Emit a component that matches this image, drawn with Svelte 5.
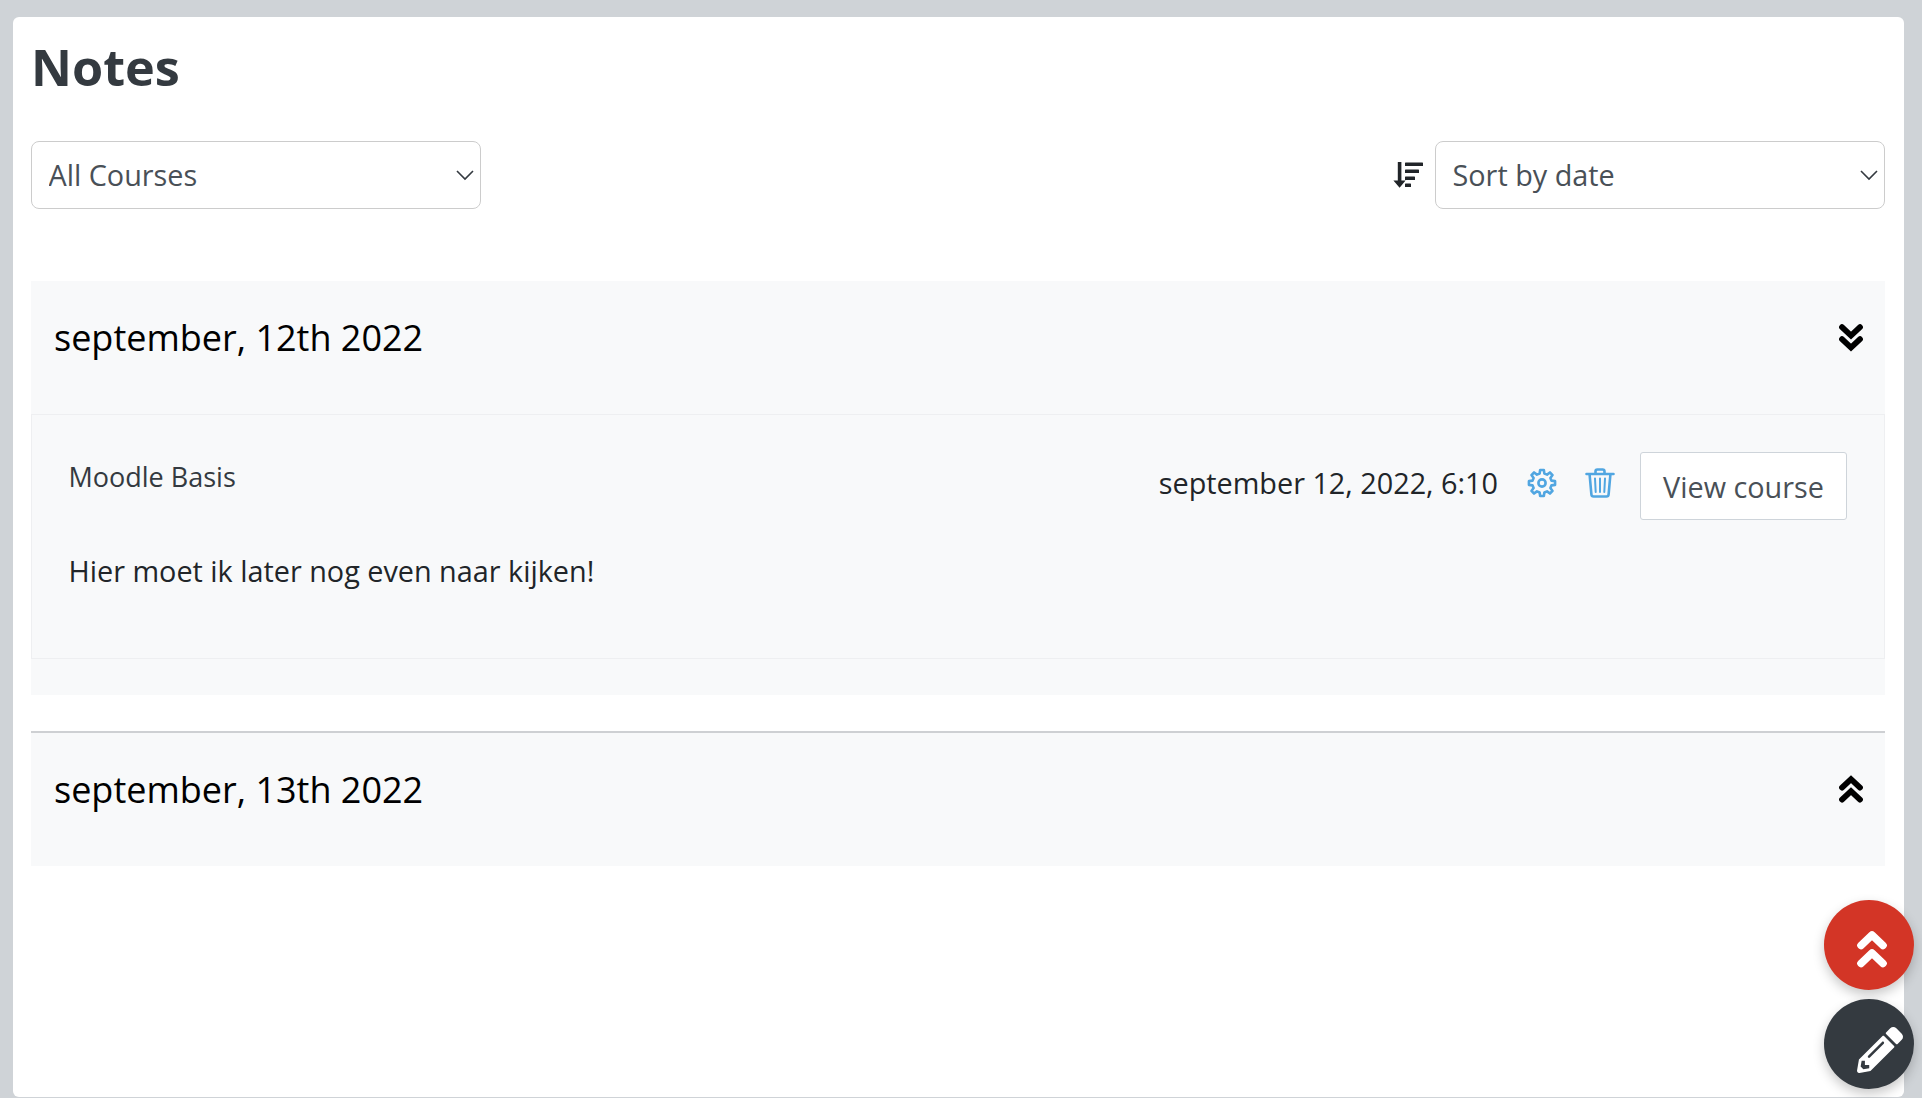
<script>
  const toothPoints = [];
  for (let i = 0; i < 8; i++) {
    const c = i * 45 - 90;
    for (const [r, d] of [[9.8, -14], [13.2, -8], [13.2, 8], [9.8, 14]]) {
      const a = ((c + d) * Math.PI) / 180;
      toothPoints.push(`${(15 + r * Math.cos(a)).toFixed(2)},${(15 + r * Math.sin(a)).toFixed(2)}`);
    }
  }
  const gear = toothPoints.join(" ");

  const sections = [
    {
      title: "september, 12th 2022",
      open: true,
      notes: [
        {
          course: "Moodle Basis",
          date: "september 12, 2022, 6:10",
          text: "Hier moet ik later nog even naar kijken!",
        },
      ],
    },
    { title: "september, 13th 2022", open: false, notes: [] },
  ];
</script>

<div class="page">
  <main class="card">
    <h1>Notes</h1>

    <div class="filters">
      <div class="select-wrap">
        <select aria-label="Course">
          <option>All Courses</option>
        </select>
        <svg class="caret" viewBox="0 0 18 11" aria-hidden="true"><path d="M1 1l8 8 8-8" /></svg>
      </div>

      <div class="sort">
        <svg class="sort-icon" viewBox="0 0 30 26" aria-hidden="true">
          <path d="M4.8 0h3.6v18.6h4.2l-6 7.2L.4 18.6h4.4z" />
          <rect x="12" y="0.5" width="18" height="3.6" rx="0.6" />
          <rect x="12" y="7.5" width="14" height="3.6" rx="0.6" />
          <rect x="12" y="14.5" width="10" height="3.6" rx="0.6" />
          <rect x="12" y="21.5" width="6" height="3.6" rx="0.6" />
        </svg>
        <div class="select-wrap">
          <select aria-label="Sort">
            <option>Sort by date</option>
          </select>
          <svg class="caret" viewBox="0 0 18 11" aria-hidden="true"><path d="M1 1l8 8 8-8" /></svg>
        </div>
      </div>
    </div>

    {#each sections as section}
      <section class:closed={!section.open}>
        <header>
          <h2>{section.title}</h2>
          <svg class="chevrons" viewBox="0 0 24 29" aria-hidden="true">
            {#if section.open}
              <path d="M3 3.2l9 8.4 9-8.4M3 15.2l9 8.4 9-8.4" transform="translate(0 1)" />
            {:else}
              <path d="M3 12.6l9-8.4 9 8.4M3 24.6l9-8.4 9 8.4" />
            {/if}
          </svg>
        </header>

        {#each section.notes as note}
          <article>
            <div class="note-top">
              <span class="course">{note.course}</span>
              <div class="note-actions">
                <span class="date">{note.date}</span>
                <svg class="action" viewBox="0 0 30 30" aria-hidden="true">
                  <polygon points={gear} />
                  <circle cx="15" cy="15" r="3.6" />
                </svg>
                <svg class="action trash" viewBox="0 0 30 30" aria-hidden="true">
                  <path d="M1.5 6h27M10.5 5.5V3.4c0-1 .8-1.9 1.9-1.9h5.2c1.1 0 1.9.9 1.9 1.9v2.1" />
                  <path d="M4.6 6.5l1.8 20c.1 1.2 1 2 2.2 2h12.8c1.2 0 2.1-.8 2.2-2l1.8-20" />
                  <path class="thin" d="M10 10.5l.7 13.5M15 10.5V24M20 10.5L19.3 24" />
                </svg>
                <button>View course</button>
              </div>
            </div>
            <p>{note.text}</p>
          </article>
        {/each}
      </section>
    {/each}
  </main>

  <button class="fab up" aria-label="Back to top">
    <svg viewBox="0 0 30 38" aria-hidden="true">
      <path d="M4 15.5L15 5l11 10.5M4 33.5L15 23l11 10.5" />
    </svg>
  </button>
  <button class="fab edit" aria-label="Add note">
    <svg viewBox="0 0 512 512" aria-hidden="true">
      <path d="M497.9 142.1l-46.1 46.1c-4.7 4.7-12.3 4.7-17 0l-111-111c-4.7-4.7-4.7-12.3 0-17l46.1-46.1c18.7-18.7 49.1-18.7 67.9 0l60.1 60.1c18.8 18.7 18.8 49.1 0 67.9zM284.2 99.8L21.6 362.4.4 483.9c-2.9 16.4 11.4 30.6 27.8 27.8l121.5-21.3 262.6-262.6c4.7-4.7 4.7-12.3 0-17l-111-111c-4.8-4.7-12.4-4.7-17.1 0zM124.1 339.9c-5.5-5.5-5.5-14.3 0-19.8l154-154c5.5-5.5 14.3-5.5 19.8 0s5.5 14.3 0 19.8l-154 154c-5.5 5.5-14.3 5.5-19.8 0zM88 424h48v36.3l-64.5 11.3-31.1-31.1L51.7 376H88v48z" />
    </svg>
  </button>
</div>

<style>
  :global(body) {
    margin: 0;
    background: #cfd3d7;
    font-family: "Open Sans", "Noto Sans", sans-serif;
    overflow: hidden;
  }

  .page {
    height: 1098px;
    box-sizing: border-box;
    padding: 17px 18px 0 13px;
  }

  .card {
    height: 1080px;
    box-sizing: border-box;
    padding: 0 19px 0 18px;
    background: #fff;
    border-radius: 6px;
    overflow: hidden;
  }

  h1 {
    margin: 0;
    padding-top: 16px;
    font-size: 50.4px;
    line-height: 68px;
    font-weight: 700;
    color: #343a40;
  }

  .filters {
    display: flex;
    justify-content: space-between;
    margin-top: 40px;
  }

  .select-wrap {
    position: relative;
    width: 450px;
    height: 68px;
  }

  select {
    appearance: none;
    display: block;
    width: 100%;
    height: 100%;
    box-sizing: border-box;
    padding: 0 40px 2px 16.5px;
    border: 1px solid #ccc;
    border-radius: 8px;
    background: #fff;
    color: #495057;
    font-family: inherit;
    font-size: 28.8px;
  }

  .caret {
    position: absolute;
    right: 7px;
    top: 29px;
    width: 18px;
    height: 11px;
    fill: none;
    stroke: #343a40;
    stroke-width: 1.6;
  }

  .sort {
    display: flex;
    align-items: center;
    gap: 12px;
  }

  .sort-icon {
    width: 30px;
    height: 26px;
    overflow: visible;
    fill: #212529;
  }

  section {
    margin-top: 72px;
    padding-bottom: 36px;
    background: #f8f9fa;
  }

  section.closed {
    margin-top: 36px;
    padding-bottom: 0;
    border-top: 2px solid #ced0d3;
  }

  header {
    display: flex;
    align-items: center;
    justify-content: space-between;
    height: 133px;
    box-sizing: border-box;
    padding: 0 22px 20px 23px;
  }

  h2 {
    margin: 0;
    font-size: 36px;
    font-weight: 400;
    color: #000;
  }

  .chevrons {
    width: 24px;
    height: 29px;
    fill: none;
    stroke: #000;
    stroke-width: 5.8;
    stroke-linecap: round;
    stroke-linejoin: miter;
  }

  article {
    height: 245px;
    box-sizing: border-box;
    padding: 37px 37px 0 36.5px;
    border: 1px solid #eeeff1;
  }

  .note-top {
    display: flex;
    justify-content: space-between;
    align-items: flex-start;
  }

  .course {
    margin-top: 5px;
    font-size: 27px;
    line-height: 40px;
    color: #343a40;
  }

  .note-actions {
    display: flex;
    align-items: flex-start;
  }

  .date {
    margin-top: 10px;
    font-size: 28.8px;
    line-height: 42px;
    color: #212529;
  }

  .action {
    width: 30px;
    height: 30px;
    margin: 16px 0 0 29px;
    fill: none;
    stroke: #51a6e1;
    stroke-width: 2.6;
    stroke-linecap: round;
    stroke-linejoin: round;
  }

  .trash {
    margin-left: 28px;
  }

  .thin {
    stroke-width: 2;
  }

  button {
    font-family: inherit;
  }

  .note-actions button {
    width: 207px;
    height: 68px;
    margin-left: 25px;
    padding: 0;
    border: 1px solid #ced4da;
    border-radius: 3px;
    background: #fff;
    color: #495057;
    font-size: 28.8px;
  }

  p {
    margin: 30px 0 0;
    font-size: 28.8px;
    line-height: 42px;
    color: #212529;
  }

  .fab {
    position: fixed;
    left: 1824px;
    display: flex;
    align-items: center;
    justify-content: center;
    width: 90px;
    height: 90px;
    padding: 0;
    border: 0;
    border-radius: 50%;
    box-shadow: 0 5px 12px rgba(0, 0, 0, 0.22);
  }

  .up {
    top: 900px;
    background: #d33526;
  }

  .up svg {
    width: 30px;
    height: 38px;
    margin: 7px 0 0 5px;
    fill: none;
    stroke: #fff;
    stroke-width: 7.6;
    stroke-linecap: round;
    stroke-linejoin: round;
  }

  .edit {
    top: 999px;
    background: #343a40;
  }

  .edit svg {
    width: 46px;
    height: 46px;
    margin: 11px 0 0 22px;
    fill: #fff;
  }
</style>
